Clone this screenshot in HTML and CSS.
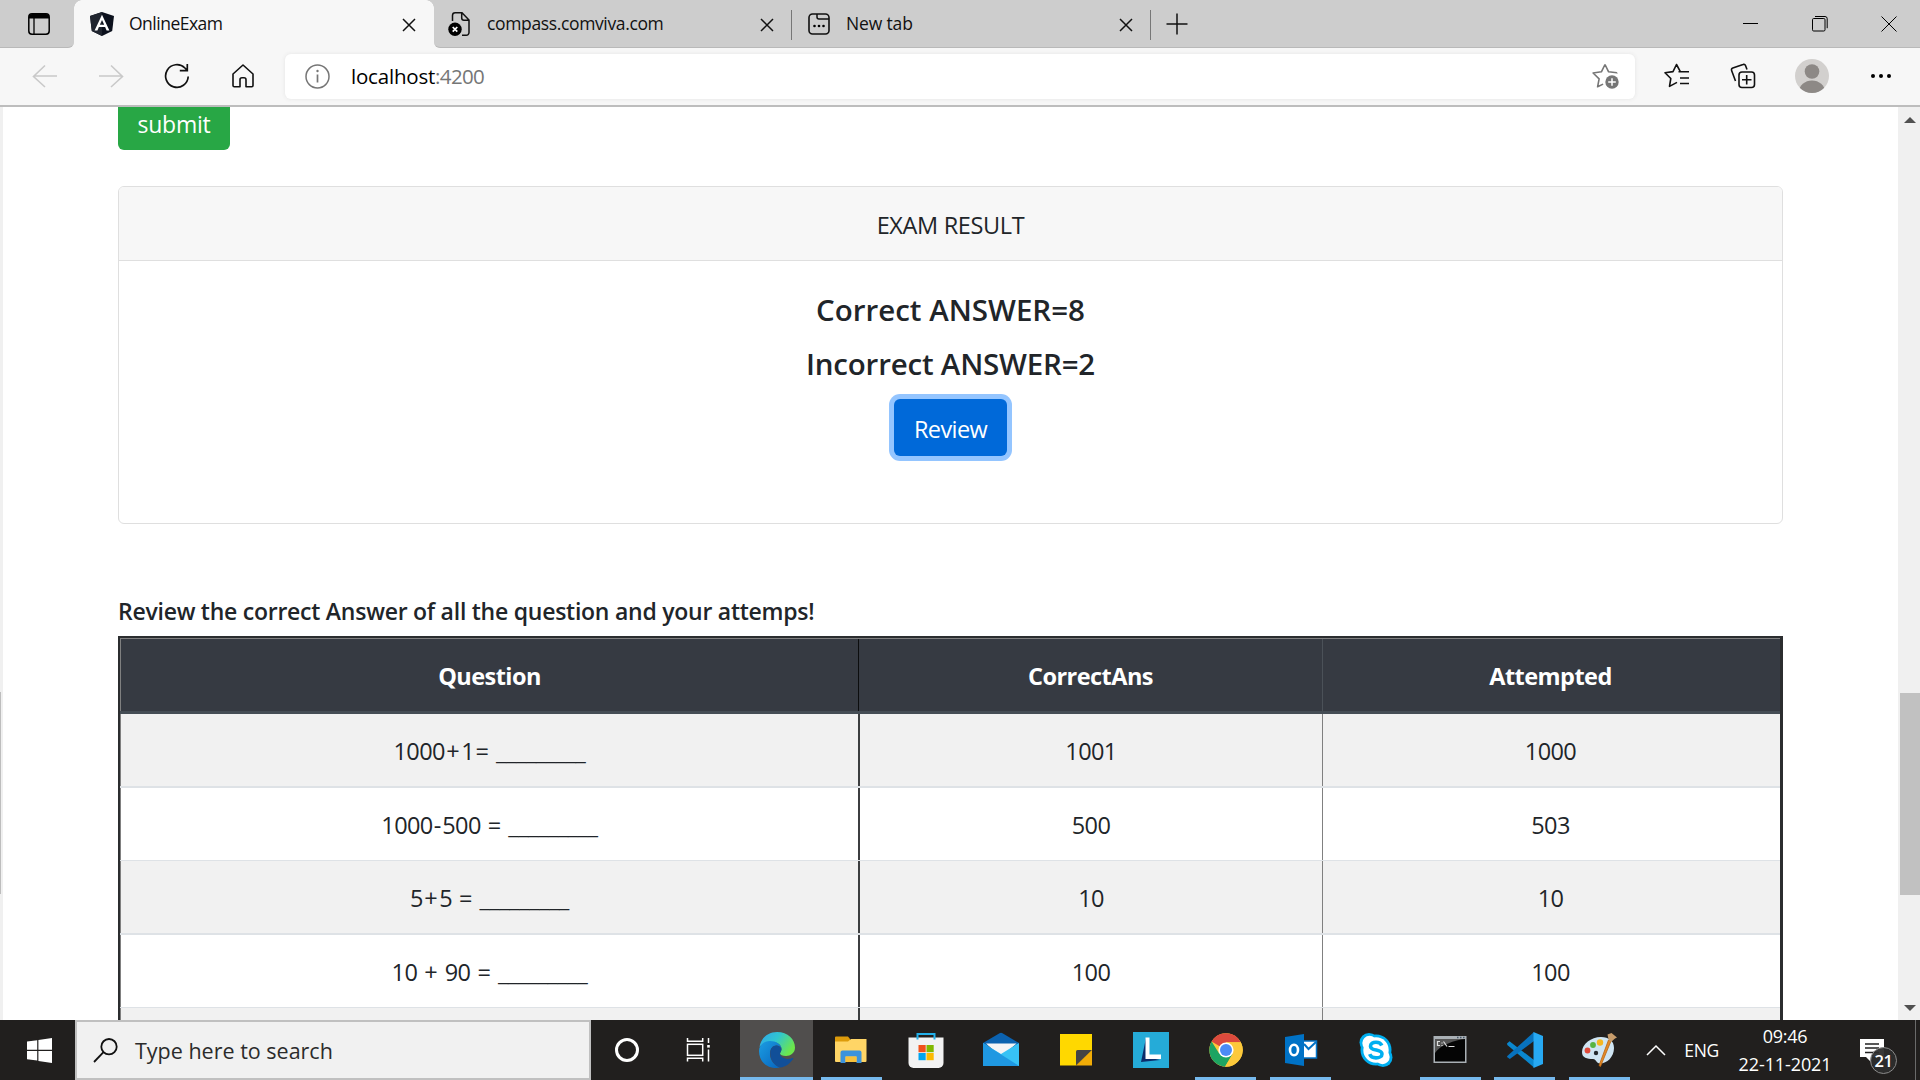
FILE: index.html
```html
<!DOCTYPE html>
<html lang="en">
<head>
<meta charset="utf-8">
<title>OnlineExam</title>
<link rel="stylesheet" href="styles.css">
</head>
<body>
<div class="screen">
  <header class="tabstrip">
    <div class="tab-actions">
      <svg width="22" height="22" viewBox="0 0 22 22"><rect x=".8" y=".8" width="20.4" height="20.4" rx="3.2" fill="none" stroke="#000" stroke-width="1.5"/><path d="M1 5.500V4a3 3 0 0 1 3-3h14a3 3 0 0 1 3 3v1.500z"/><path d="M6 5v16" stroke="#000" stroke-width="1.3"/></svg>
    </div>
    <div class="tab tab-active">
      <svg class="tab-icon" width="24" height="24" viewBox="0 0 24 24"><path d="M12 0l12 4-1.800 15L12 24 1.800 19 0 4z" fill="#0c111d"/><path d="M12 0v24L1.800 19 0 4z" fill="#20252f"/><path d="M12 2.800L4.600 18.500h2.800l1.500-3.600h6.200l1.500 3.600h2.800zm0 5.300l2.200 4.700H9.800z" fill="#fff"/></svg>
      <span class="tab-title t-online">OnlineExam</span>
      <svg class="tab-close" width="14" height="14" viewBox="0 0 14 14"><path d="M1 1l12 12M13 1L1 13" stroke="#111" stroke-width="1.500"/></svg>
    </div>
    <div class="tab tab-second">
      <svg class="tab-icon" width="24" height="24" viewBox="0 0 24 24"><path d="M4.500 9V3.500A2.700 2.700 0 0 1 7.200.8H14l7 7.200v12.500a2.700 2.700 0 0 1-2.700 2.700H14M13.700 1v5a2.200 2.200 0 0 0 2.200 2.200H21" fill="none" stroke="#111" stroke-width="1.500"/><circle cx="7" cy="17.300" r="6.700"/><path d="M4.700 15l4.600 4.600M9.300 15l-4.600 4.600" stroke="#fff" stroke-width="1.700"/></svg>
      <span class="tab-title t-compass">compass.comviva.com</span>
      <svg class="tab-close" width="14" height="14" viewBox="0 0 14 14"><path d="M1 1l12 12M13 1L1 13" stroke="#111" stroke-width="1.500"/></svg>
    </div>
    <div class="tab tab-third">
      <svg class="tab-icon" width="22" height="22" viewBox="0 0 22 22"><rect x="1" y="1" width="20" height="20" rx="3.500" fill="none" stroke="#111" stroke-width="1.600"/><path d="M9 1v3a2 2 0 0 0 2 2h10" fill="none" stroke="#111" stroke-width="1.500"/><circle cx="6.500" cy="13" r="1.300"/><circle cx="11" cy="13" r="1.300"/><circle cx="15.500" cy="13" r="1.300"/></svg>
      <span class="tab-title t-new">New tab</span>
      <svg class="tab-close" width="14" height="14" viewBox="0 0 14 14"><path d="M1 1l12 12M13 1L1 13" stroke="#111" stroke-width="1.500"/></svg>
    </div>
    <svg class="new-tab" width="22" height="22" viewBox="0 0 22 22"><path d="M11 .500v21M.500 11h21" stroke="#111" stroke-width="1.500"/></svg>
    <div class="window-controls">
      <svg width="16" height="16" viewBox="0 0 16 16"><path d="M0 7.500h15" stroke="#000"/></svg>
      <svg width="16" height="16" viewBox="0 0 16 16" fill="none" stroke="#000"><rect x=".5" y="2.500" width="12.500" height="12.500" rx="1.200"/><path d="M3 .500h10a2.200 2.200 0 0 1 2.200 2.200v9.500"/></svg>
      <svg width="16" height="16" viewBox="0 0 16 16"><path d="M.5.5l15 15M15.500.5l-15 15" stroke="#000"/></svg>
    </div>
  </header>

  <nav class="toolbar">
    <svg class="nav-icon" width="66" height="24" viewBox="0 0 66 24" fill="none" stroke="#c9c9c9" stroke-width="1.600"><path d="M45 1.500L33.500 12.500 45 23M33.500 12H57"/></svg>
    <svg class="nav-icon" width="66" height="24" viewBox="0 0 66 24" fill="none" stroke="#c9c9c9" stroke-width="1.600"><path d="M45 1.500L56.500 12.500 45 23M56.500 12H33"/></svg>
    <svg class="nav-icon" width="66" height="26" viewBox="0 0 66 26" fill="none" stroke="#111" stroke-width="1.700"><path d="M56.200 13.500a11.300 11.300 0 1 1-3.300-8.500l2.200 2.200M55.300 1v6.700h-7.500"/></svg>
    <svg class="nav-icon" width="66" height="24" viewBox="0 0 66 24" fill="none" stroke="#111" stroke-width="1.600" stroke-linejoin="round"><path d="M45 1L35 10v11.500a1.200 1.200 0 0 0 1.200 1.200H42v-7a2 2 0 0 1 2-2h2a2 2 0 0 1 2 2v7h5.800a1.200 1.200 0 0 0 1.200-1.200V10z"/></svg>
    <div class="address">
      <svg width="25" height="25" viewBox="0 0 25 25"><circle cx="12.500" cy="12.500" r="11.500" fill="none" stroke="#767676" stroke-width="1.500"/><path d="M12.500 10.500v8" stroke="#767676" stroke-width="1.700"/><circle cx="12.500" cy="7" r="1.200" fill="#767676"/></svg>
      <span class="host">localhost</span><span class="port">:4200</span>
      <svg class="star-add" width="28" height="26" viewBox="0 0 28 26"><path d="M13 1.500l3.600 7.300 8.300 1M13 1.500L9.400 8.800l-8.300 1.200 6 5.800-1.500 8 5.500-2.700M24.900 9.800v.7" fill="none" stroke="#767676" stroke-width="1.600" stroke-linejoin="round"/><circle cx="20" cy="19" r="6.700" fill="#767676"/><path d="M20 15.200v7.600M16.200 19h7.600" stroke="#fff" stroke-width="1.500"/></svg>
    </div>
    <svg class="t-fav" width="26" height="26" viewBox="0 0 26 26" fill="none" stroke="#111" stroke-width="1.600" stroke-linejoin="round"><path d="M16.200 8.300L12.500 1.500 9 8.600 1 9.800l5.800 5.700L5.500 23.400l7.500-4M14.500 8.800H25M16 15h9M16 20.500h9"/></svg>
    <svg class="t-coll" width="26" height="26" viewBox="0 0 26 26" fill="none" stroke="#111" stroke-width="1.600"><rect x="9" y="9" width="15.500" height="15.500" rx="3"/><path d="M16.700 12v9.500M12 16.700h9.500M5.500 18L1.600 7.500a2 2 0 0 1 1.200-2.600L13 1.500a2 2 0 0 1 2.600 1.200L17 6.500"/></svg>
    <svg class="t-user" width="34" height="34" viewBox="0 0 34 34"><clipPath id="u"><circle cx="17" cy="17" r="17"/></clipPath><circle cx="17" cy="17" r="17" fill="#d2d0ce"/><g fill="#8d8986" clip-path="url(#u)"><circle cx="17" cy="12.500" r="7.300"/><ellipse cx="17" cy="33" rx="13" ry="11.500"/></g></svg>
    <svg class="t-more" width="22" height="6" viewBox="0 0 22 6"><circle cx="3" cy="3" r="2"/><circle cx="11" cy="3" r="2"/><circle cx="19" cy="3" r="2"/></svg>
  </nav>

  <div class="viewport">
    <div class="edge-strip"><div class="edge-thumb"></div></div>
    <main class="page">
      <button class="btn btn-submit">submit</button>
      <section class="card">
        <div class="card-header">EXAM RESULT</div>
        <div class="card-body">
          <h4 class="result">Correct ANSWER=8</h4>
          <h4 class="result r-wrong">Incorrect ANSWER=2</h4>
          <button class="btn btn-review">Review</button>
        </div>
      </section>
      <h5 class="caption">Review the correct Answer of all the question and your attemps!</h5>
      <div class="table">
        <div class="row head"><div>Question</div><div>CorrectAns</div><div>Attempted</div></div>
        <div class="row odd"><div>1000<i>+</i>1<i>=</i> <u>_________</u></div><div>1001</div><div>1000</div></div>
        <div class="row thick"><div>1000<b>-</b>500 <i>=</i> <u>_________</u></div><div>500</div><div>503</div></div>
        <div class="row odd"><div>5<i>+</i>5 <i>=</i> <u>_________</u></div><div>10</div><div>10</div></div>
        <div class="row thick"><div>10 <i>+</i> 90 <i>=</i> <u>_________</u></div><div>100</div><div>100</div></div>
        <div class="row odd"><div></div><div></div><div></div></div>
      </div>
    </main>
    <div class="scrollbar">
      <svg width="12" height="6" viewBox="0 0 12 6"><path d="M0 6L6 0l6 6z" fill="#505050"/></svg>
      <div class="thumb"></div>
      <svg width="12" height="6" viewBox="0 0 12 6"><path d="M0 0l6 6 6-6z" fill="#505050"/></svg>
    </div>
  </div>

  <footer class="taskbar">
    <div class="start"><svg width="25" height="25" viewBox="0 0 25 25" fill="#fff"><path d="M0 3.600l10.200-1.400v9.600H0zM11.400 2L25 0v11.800H11.400zM0 13h10.200v9.600L0 21.200zM11.400 13H25v12l-13.600-2z"/></svg></div>
    <div class="search">
      <svg width="25" height="25" viewBox="0 0 25 25" fill="none" stroke="#111" stroke-width="1.800"><circle cx="16" cy="8.700" r="7.700"/><path d="M10.500 14.200L1 24"/></svg>
      <span>Type here to search</span>
    </div>
    <div class="sys"><svg width="26" height="26" viewBox="0 0 26 26"><circle cx="13" cy="13" r="10.500" fill="none" stroke="#fff" stroke-width="3"/></svg></div>
    <div class="sys"><svg width="26" height="26" viewBox="0 0 26 26" fill="none" stroke="#fff" stroke-width="1.500"><path d="M1.500 1v3.300h15.200V1M1.500 24.500v-3.300h15.200v3.300"/><rect x="1.500" y="7.300" width="15.200" height="11"/><path d="M22.500 1v5M22.500 12.500v12"/><rect x="21.200" y="8" width="2.600" height="2.600" fill="#fff" stroke="none"/></svg></div>
    <div class="apps">
      <div class="app current"><svg width="36" height="36" viewBox="0 0 36 36"><defs><linearGradient id="e1" x1="0" y1="0" x2="1" y2=".5"><stop offset="0" stop-color="#2fa5ee"/><stop offset=".5" stop-color="#30c6d0"/><stop offset="1" stop-color="#6ce64c"/></linearGradient><linearGradient id="e2" x1="0" y1="0" x2="1" y2="1"><stop offset="0" stop-color="#1c9de2"/><stop offset="1" stop-color="#0663bd"/></linearGradient></defs><path d="M.5 15C2 6 9 0 18 0c11 0 18 7.500 18 15.500 0 5.500-4.500 8.500-9 8.500-3.500 0-6-1-6-2.500 0-1 1.500-2 1.500-4.500 0-4-4-7-9.500-7C8 10 3 12 .5 15z" fill="url(#e1)"/><path d="M0 19C0 13 5 9 11 9c6 0 11.500 3.500 11.500 8-1-2.500-3-3.500-5-3.500-4 0-6.500 3.500-6.500 8.500 0 6 4 11 10 13.600C9 38 0 30 0 19z" fill="url(#e2)"/><path d="M11.200 21c0-4 2.500-7.500 6.300-7.500 2 0 4 1.200 5 3.500 0 2.500-1.500 3.500-1.500 4.500 0 3 4 5.500 8.500 5.500 1.500 0 3-.4 4-.9.8-.3 1 .4.600 1C31 31.500 27 35 21 35.600 15 33 11.200 28 11.200 21z" fill="#114f98"/></svg></div>
      <div class="app open"><svg width="34" height="36" viewBox="0 0 34 36"><path d="M1 5.500a1 1 0 0 1 1-1h12l2 2.500v4H1z" fill="#dd9b0b"/><path d="M1 9.500h13l3-2.500h15.500V29a1 1 0 0 1-1 1H2a1 1 0 0 1-1-1z" fill="#ffd566"/><path d="M6.500 31V20.500a2 2 0 0 1 2-2h17a2 2 0 0 1 2 2V31h-5v-6.500h-11V31z" fill="#3c93dc"/><path d="M11.500 24.500h11V30h-11z" fill="#f8c13b"/></svg></div>
      <div class="app"><svg width="36" height="36" viewBox="0 0 36 36"><path d="M.5 5.500h35V31a5 5 0 0 1-5 5h-25a5 5 0 0 1-5-5z" fill="#f2f2f2"/><path d="M9.500 7.500V2h17v5.500" fill="none" stroke="#22b0ea" stroke-width="2"/><path d="M10.500 13h7.200v7.200h-7.200z" fill="#f1511b"/><path d="M18.500 13h7.200v7.200h-7.200z" fill="#80b900"/><path d="M10.500 21h7.200v7.200h-7.200z" fill="#00a4ef"/><path d="M18.500 21h7.200v7.200h-7.200z" fill="#fbb900"/></svg></div>
      <div class="app"><svg width="36" height="36" viewBox="0 0 36 36"><path d="M0 11L16.500 1.200a3 3 0 0 1 3 0L36 11l-3 3H3z" fill="#0b62b0"/><path d="M3 11.500h30.500L18 25z" fill="#f4f4f6"/><path d="M0 11l18 11 18-11v23H0z" fill="#37c2f5"/><path d="M0 11l36 23H0z" fill="#1f98e2"/></svg></div>
      <div class="app"><svg width="34" height="36" viewBox="0 0 34 36"><path d="M1 2h32v16L17 33.500H1z" fill="#ffd800"/><path d="M17 33.500V19.500a1.500 1.500 0 0 1 1.500-1.500H33z" fill="#444"/><path d="M33 18v15.500H17z" fill="#f1ac07"/></svg></div>
      <div class="app"><svg width="36" height="36" viewBox="0 0 36 36"><path d="M0 0h36v36H0z" fill="#25abd8"/><path d="M13 6L8 30l19-2-14-3z" fill="#0b2d6b"/><path d="M12.500 5.500h4v17H28v4.500H12.500z" fill="#fff"/></svg></div>
      <div class="app open"><svg width="34" height="36" viewBox="0 0 34 36"><circle cx="17" cy="18" r="16.700" fill="#fdc93b"/><path d="M17 18L2.600 9.600A16.700 16.700 0 0 1 31.800 10.300H17z" fill="#dc4a3d"/><path d="M2.600 9.600A16.700 16.700 0 0 0 16 34.700L23.600 22 17 18l-6.800 3.500z" fill="#1da462"/><path d="M17 10.300h14.800A16.700 16.700 0 0 1 16 34.700l7.800-13z" fill="#fdc93b"/><circle cx="17" cy="18" r="7.600" fill="#fff"/><circle cx="17" cy="18" r="6" fill="#4c8bf5"/></svg></div>
      <div class="app open"><svg width="34" height="36" viewBox="0 0 34 36"><path d="M17 9h15.500v17H17z" fill="#fff" stroke="#0072c6" stroke-width="1.500"/><path d="M20 12l4.500 5 7.500-7" fill="none" stroke="#0072c6" stroke-width="2"/><path d="M1 5l19-3v32L1 31z" fill="#0072c6"/><ellipse cx="10" cy="18" rx="4" ry="5.200" fill="none" stroke="#fff" stroke-width="2.600"/></svg></div>
      <div class="app"><svg width="34" height="36" viewBox="0 0 34 36"><g fill="#00aff0"><circle cx="17" cy="18" r="15.500"/><circle cx="10" cy="10.500" r="9.500"/><circle cx="24" cy="25.500" r="9.500"/></g><g fill="#fff"><circle cx="17" cy="18" r="12.700"/><circle cx="10.500" cy="11" r="7.200"/><circle cx="23.500" cy="25" r="7.200"/></g><path d="M22.800 13.500c-1-2.300-3-3.200-5.800-3.200-3.200 0-5.500 1.400-5.500 3.900 0 5.300 11.500 2.500 11.500 7.700 0 2.500-2.700 4-6 4-3.100 0-5.400-1.200-6.300-3.700" fill="none" stroke="#00aff0" stroke-width="3.600"/></svg></div>
      <div class="app open narrow"><svg width="34" height="36" viewBox="0 0 34 36"><path d="M.5 4h33v27H.5z" fill="#aab0b5"/><path d="M2 7h30v22.500H2z" fill="#050505"/><path d="M2 7h30C22 8 7 13 2 21z" fill="#555"/><path d="M7 9.500H4.500v4H7M9 10.500v1M9 13v1M10.500 9.500l3.500 5M15.500 14.500h6" fill="none" stroke="#ddd" stroke-width="1.200"/><path d="M24 5.500h1.500M27 5.500h1.500M30 5.500h1.500" stroke="#456" stroke-width="1.500"/></svg></div>
      <div class="app open narrow"><svg width="36" height="36" viewBox="0 0 36 36"><path d="M0 11.500L2.500 9.300 27 28v7.500L.3 13z" fill="#0a87cf"/><path d="M.3 24L27 0v9L2.800 27 0 25z" fill="#0872bd"/><path d="M26.500 0L36 4v28l-9.500 4z" fill="#27a9f3"/></svg></div>
      <div class="app open narrow"><svg width="36" height="36" viewBox="0 0 36 36"><path d="M1 20C1 12 10 5 20 5c8 0 13 4 13 11 0 9-7 15.500-14 15.500-4 0-3-4-7-4.500C6 27 1 26 1 20z" fill="#cfe5f3"/><circle cx="6.500" cy="18.500" r="2.900" fill="#e04a3a"/><circle cx="12" cy="13" r="2.900" fill="#57b441"/><circle cx="19" cy="10.500" r="3.200" fill="#f6b722"/><circle cx="15" cy="21" r="2.200" fill="#24292e"/><path d="M27.500 8l2.500 1-10.500 25.500-1.500-1z" fill="#e58a27" stroke="#b86412" stroke-width=".8"/><path d="M26.500 2.500l4-1.500 5.500 4.500-2 1-4 3.500-2.500-2.500z" fill="#c79c6b"/></svg></div>
    </div>
    <svg class="chevron" width="20" height="12" viewBox="0 0 20 12"><path d="M1 11l9-9 9 9" fill="none" stroke="#fff" stroke-width="1.500"/></svg>
    <span class="lang">ENG</span>
    <div class="clock"><span class="time">09:46</span><span>22-11-2021</span></div>
    <div class="notify">
      <svg width="24" height="26" viewBox="0 0 24 26"><path d="M0 0h24v18H12v6l-6-6H0z" fill="#fff"/><path d="M5 5h14M5 9h14M5 13.500h14" stroke="#222" stroke-width="1.300"/></svg>
      <span class="badge">21</span>
    </div>
    <div class="peek"></div>
  </footer>
</div>
</body>
</html>
```
FILE: styles.css
```css
* { box-sizing: border-box; }
body { margin: 0; font-family: "Open Sans", "Noto Sans", sans-serif; color: #212529; background: #fff; }
svg { display: block; flex: none; }
.screen { width: 1920px; height: 1080px; display: flex; flex-direction: column; overflow: hidden; }

/* Browser tabs */
.tabstrip { height: 48px; display: flex; flex: none; background: #f7f7f7; }
.tabstrip > * { height: 48px; }
.tab-actions { width: 74px; padding: 13px 0 0 28px; background: #cdcdcd; border-bottom: 1px solid #b9b9b9; border-bottom-right-radius: 6px; }
.tab { display: flex; align-items: center; background: #cdcdcd; }
.tab-title { flex: 1; font-size: 17.5px; line-height: 24px; padding-bottom: 2px; color: #111; white-space: nowrap; }
.tab-active { width: 360px; padding: 0 18px 0 16px; background: #f7f7f7; position: relative; }
/* grey corners behind the rounded top of the selected tab */
.tab-active::before, .tab-active::after { content: ""; position: absolute; top: 0; width: 8px; height: 8px; }
.tab-active::before { left: 0; background: radial-gradient(circle at 8px 8px, transparent 7.5px, #cdcdcd 8px); }
.tab-active::after { right: 0; background: radial-gradient(circle at 0 8px, transparent 7.5px, #cdcdcd 8px); }
.tab-icon { margin-right: 15px; }
.t-online { letter-spacing: -.5px; }
.t-compass { letter-spacing: -.36px; }
.t-new { letter-spacing: -.15px; }
.tab-second { width: 357px; padding: 0 17px 0 14px; border-bottom: 1px solid #b9b9b9; border-bottom-left-radius: 6px; }
.tab-third { width: 360px; padding: 0 18px 0 17px; border-bottom: 1px solid #b9b9b9; }
.tab-close { position: relative; top: 1px; }
.tab-third .tab-icon { margin-right: 16px; }
.tab-third { background: linear-gradient(#777, #777) 0 10px / 1px 30px no-repeat, linear-gradient(#777, #777) 100% 10px / 1px 30px no-repeat, #cdcdcd; }
.new-tab { width: 53px; padding: 13px 16px 12px 15px; background: #cdcdcd; border-bottom: 1px solid #b9b9b9; }
.window-controls { flex: 1; display: flex; justify-content: flex-end; gap: 53px; padding: 16px 23px 0 0; background: #cdcdcd; border-bottom: 1px solid #b9b9b9; }

/* Address toolbar */
.toolbar { height: 59px; flex: none; display: flex; align-items: center; padding-bottom: 1px; background: #f7f7f7; border-bottom: 2px solid #bdbdbd; }
.address { width: 1350px; height: 45px; margin-left: 21px; padding: 0 15px 0 20px; display: flex; align-items: center; background: #fff; border-radius: 6px; box-shadow: 0 0 4px #e4e4e4; }
.host, .port { font-size: 20.5px; line-height: 28px; padding-bottom: 1px; }
.host { margin-left: 21px; color: #000; letter-spacing: -.2px; }
.port { color: #767676; letter-spacing: -.65px; }
.star-add { margin-left: auto; }
.t-fav { margin-left: 29px; }
.t-coll { margin-left: 40px; }
.t-user { margin-left: 39px; }
.t-more { margin-left: 41px; }

/* Page area */
.viewport { height: 913px; flex: none; display: flex; }
.edge-strip { width: 3px; padding-top: 585px; background: #f0f0f0; }
.edge-thumb { width: 1px; height: 202px; background: #bdbdbd; }
.page { width: 1895px; padding: 0 115px; overflow: hidden; }
.btn { display: block; height: 57px; border: 0; border-radius: 6px; font: 23.5px/36px "Open Sans", sans-serif; color: #fff; text-align: center; }
.btn-submit { width: 112px; height: 43px; padding: 0 0 9px; font-size: 23px; line-height: 34px; letter-spacing: -.25px; background: #28a745; border-radius: 0 0 6px 6px; }
.card { width: 1665px; height: 338px; margin-top: 36px; border: 1px solid #dfdfdf; border-radius: 6px; }
.card-header { height: 74px; padding-top: 20px; background: #f7f7f7; border-bottom: 1px solid #dfdfdf; border-radius: 5px 5px 0 0; font-size: 23.5px; line-height: 36px; letter-spacing: -.35px; text-align: center; }
.card-body { padding-top: 31px; }
.result { margin: 0 0 18px; font-size: 29.5px; font-weight: 600; line-height: 36px; text-align: center; }
.r-wrong { letter-spacing: -.2px; margin-bottom: 17px; }
.btn-review { width: 113px; margin: 0 auto; padding-top: 4px; letter-spacing: -.6px; background: #0069d9; box-shadow: 0 0 0 5px #94c5ff; }
.caption { margin: 69px 0 7px; font-size: 23px; font-weight: 600; line-height: 36px; letter-spacing: -.25px; white-space: nowrap; }

/* Review table */
.table { width: 1665px; border: 2px solid #2b2d2f; border-right-width: 3px; border-bottom: 0; }
.row { display: grid; grid-template-columns: 738px 464px 458px; font-size: 23.5px; line-height: 36px; letter-spacing: -.6px; text-align: center; height: 73px; border-bottom: 1px solid #dee2e6; }
.row.odd { height: 74px; border-bottom-width: 2px; background: #f1f1f1; }
.row > div { padding-top: 19px; border-left: 1px solid #808080; white-space: pre; }
.row > div:nth-child(2) { border-left: 2px solid #3c3e40; }
.row > div:nth-child(3) { padding-right: 2px; }
.row.head { height: 76px; border-top: 1px solid #808080; border-bottom: 3px solid #454d55; background: #363a42; color: #fff; font-weight: 700; letter-spacing: -.55px; }
.row.head > div:nth-child(2) { border-left: 1px solid #0c0d0e; }
.row.head > div:nth-child(3) { border-left-color: #4b5158; }
.row i { font-style: normal; letter-spacing: 0; margin: 0 1.500px; }
.row b { font-weight: 400; letter-spacing: 0; margin: 0 1px; }
.row u { text-decoration: none; letter-spacing: -.35px; }

.scrollbar { width: 22px; padding: 10px 4px 9px 6px; display: flex; flex-direction: column; align-items: center; background: #f0f0f0; }
.thumb { width: 20px; height: 202px; margin: 570px -4px auto; flex: none; background: #c1c1c1; }

/* Taskbar */
.taskbar { height: 60px; flex: none; display: flex; align-items: center; background: #211f1e; color: #fff; font-size: 17.5px; }
.start { width: 75px; padding-left: 27px; }
.search { width: 516px; height: 60px; display: flex; align-items: center; gap: 17px; padding-left: 16px; background: #f1f1f1; border: 2px solid #c0c0c0; color: #2b2b2b; font-size: 21.5px; }
.search span { padding-top: 1px; }
.sys { width: 72px; display: flex; justify-content: center; }
.apps { margin-left: 5px; height: 60px; display: flex; gap: 1.900px; }
.app { width: 73px; height: 60px; padding-top: 12px; display: flex; flex-direction: column; align-items: center; }
.app::after { content: ""; margin-top: 9px; width: 61px; height: 3px; }
.app.open::after { background: #76b9ed; }
.app.narrow { width: 72.500px; }
.app.current { background: #504e4d; }
.app.current::after { width: 73px; background: #76b9ed; }
.chevron { margin-left: 11px; }
.lang { margin-left: 18px; letter-spacing: -.3px; }
.clock { margin-left: 19px; width: 94px; display: flex; flex-direction: column; align-items: center; font-size: 18px; line-height: 28px; letter-spacing: -.1px; white-space: nowrap; }
.time { letter-spacing: -.3px; }
.notify { position: relative; margin-left: 28px; padding-top: 3px; }
.badge { position: absolute; left: 10px; top: 11px; width: 27px; height: 27px; border: 1px solid #8a8a8a; border-radius: 50%; background: rgba(45, 45, 45, .95); font-size: 16.5px; font-weight: 600; line-height: 25px; letter-spacing: -.5px; text-align: center; }
.peek { width: 1px; height: 60px; margin-left: auto; margin-right: 4px; background: #6a6a6a; }
```
